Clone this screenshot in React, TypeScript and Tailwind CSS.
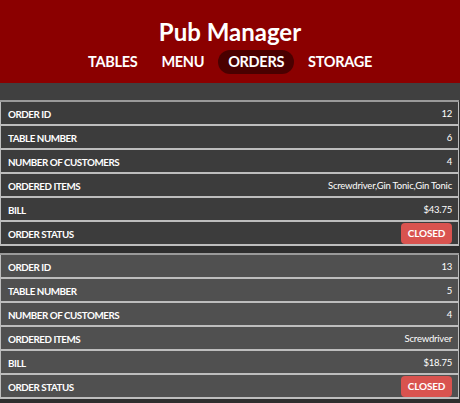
import React from "react";

type Order = {
  id: number;
  table: number;
  customers: number;
  items: string;
  bill: string;
};

const orders: Order[] = [
  { id: 12, table: 6, customers: 4, items: "Screwdriver,Gin Tonic,Gin Tonic", bill: "$43.75" },
  { id: 13, table: 5, customers: 4, items: "Screwdriver", bill: "$18.75" },
];

function Row({ label, children, bg }: { label: string; children: React.ReactNode; bg: string }) {
  return (
    <div className={`flex h-[24px] items-center justify-between border-x border-b-2 border-[#bdbdbd] pl-[7px] pr-[6px] pt-[2px] ${bg}`}>
      <span className="text-[9.8px] font-bold tracking-[-0.45px] text-white">{label}</span>
      <span className="text-[9.5px] tracking-[-0.2px] text-white">{children}</span>
    </div>
  );
}

function Card({ o, bg }: { o: Order; bg: string }) {
  return (
    <div className="border-t-2 border-[#9a9a9a]">
      <Row label="ORDER ID" bg={bg}>{o.id}</Row>
      <Row label="TABLE NUMBER" bg={bg}>{o.table}</Row>
      <Row label="NUMBER OF CUSTOMERS" bg={bg}>{o.customers}</Row>
      <Row label="ORDERED ITEMS" bg={bg}>{o.items}</Row>
      <Row label="BILL" bg={bg}>{o.bill}</Row>
      <Row label="ORDER STATUS" bg={bg}>
        <span className="-mt-[2px] inline-flex h-[21px] w-[51px] items-center justify-center rounded-[4px] bg-[#d9534f] text-[10px] font-bold tracking-[-0.2px] text-white">
          CLOSED
        </span>
      </Row>
    </div>
  );
}

export default function App() {
  return (
    <div className="min-h-[403px] w-[460px] bg-[#2e2e2e]" style={{ fontFamily: "Lato, 'Open Sans', sans-serif" }}>
      <header className="flex h-[83px] flex-col items-center bg-[#8b0000] pt-[16px]">
        <h1 className="text-[24px] font-bold leading-[32px] text-white">Pub Manager</h1>
        <nav className="mt-[2px] flex items-center gap-[4px] text-[14.5px] font-bold tracking-[-0.3px] text-white">
          <span className="px-[10px] py-[1px]">TABLES</span>
          <span className="px-[10px] py-[1px]">MENU</span>
          <span className="rounded-full bg-[#4a0000] px-[10px] py-[1px]">ORDERS</span>
          <span className="px-[10px] py-[1px]">STORAGE</span>
        </nav>
      </header>
      <div className="h-[17px] bg-[#404040]" />
      <div className="mr-[1px]">
        <Card o={orders[0]} bg="bg-[#3c3c3c]" />
        <div className="h-[7px] bg-[#2e2e2e]" />
        <Card o={orders[1]} bg="bg-[#505050]" />
      </div>
    </div>
  );
}
